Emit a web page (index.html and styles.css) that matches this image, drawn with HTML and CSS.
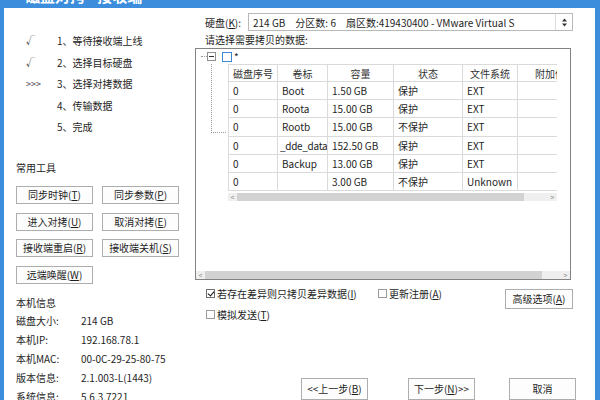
FILE: index.html
```html
<!DOCTYPE html>
<html lang="zh-CN">
<head>
  <meta charset="UTF-8" />
  <title>磁盘对拷 - 接收端</title>
  <link rel="stylesheet" href="styles.css">
</head>
<body>
  <div class="window">
    <div class="titlebar"><span class="title">磁盘对拷 - 接收端</span></div>
    <div class="frame">
      <aside class="side">
        <ul class="steps">
          <li><span class="mark">√</span>1、等待接收端上线</li>
          <li><span class="mark">√</span>2、选择目标硬盘</li>
          <li><span class="mark">&gt;&gt;&gt;</span>3、选择对拷数据</li>
          <li><span class="mark"></span>4、传输数据</li>
          <li><span class="mark"></span>5、完成</li>
        </ul>

        <div class="group-title">常用工具</div>
        <div class="tools">
          <button class="btn">同步时钟(<u>T</u>)</button>
          <button class="btn">同步参数(<u>P</u>)</button>
          <button class="btn">进入对拷(<u>U</u>)</button>
          <button class="btn">取消对拷(<u>E</u>)</button>
          <button class="btn">接收端重启(<u>R</u>)</button>
          <button class="btn">接收端关机(<u>S</u>)</button>
          <button class="btn">远端唤醒(<u>W</u>)</button>
        </div>

        <div class="info">
          <div class="info-title">本机信息</div>
          <div class="info-row"><span class="info-key">磁盘大小:</span><span>214 GB</span></div>
          <div class="info-row"><span class="info-key">本机IP:</span><span>192.168.78.1</span></div>
          <div class="info-row"><span class="info-key">本机MAC:</span><span>00-0C-29-25-80-75</span></div>
          <div class="info-row"><span class="info-key">版本信息:</span><span>2.1.003-L(1443)</span></div>
          <div class="info-row"><span class="info-key">系统信息:</span><span>5.6.3.7221</span></div>
        </div>
      </aside>

      <main class="main">
        <div class="disk-row">
          <span class="disk-label">硬盘(<u>K</u>):</span>
          <div class="select">
            <span class="select-part">214 GB</span>
            <span class="select-part">分区数: 6</span>
            <span>扇区数:419430400 - VMware Virtual S</span>
            <span class="select-arrow">
              <svg width="7" height="9" viewBox="0 0 7 9"><path d="M3.5 0.5 L6 3.5 H1 Z M1 5.5 H6 L3.5 8.5 Z" fill="#333"/></svg>
            </span>
          </div>
        </div>
        <div class="prompt">请选择需要拷贝的数据:</div>

        <div class="panel">
          <div class="tree-root">
            <span class="dot-h"></span>
            <span class="expander"></span>
            <span class="tree-check"></span>
            <span class="star">*</span>
          </div>
          <div class="tree-body">
            <span class="connector"></span>
            <div class="grid-wrap">
              <table class="grid">
                <colgroup>
                  <col style="width:49px"><col style="width:50px"><col style="width:66px">
                  <col style="width:69px"><col style="width:55px"><col style="width:75px">
                </colgroup>
                <thead>
                  <tr><th>磁盘序号</th><th>卷标</th><th>容量</th><th>状态</th><th>文件系统</th><th>附加信息</th></tr>
                </thead>
                <tbody>
                  <tr><td>0</td><td>Boot</td><td>1.50 GB</td><td>保护</td><td>EXT</td><td></td></tr>
                  <tr><td>0</td><td>Roota</td><td>15.00 GB</td><td>保护</td><td>EXT</td><td></td></tr>
                  <tr><td>0</td><td>Rootb</td><td>15.00 GB</td><td>不保护</td><td>EXT</td><td></td></tr>
                  <tr><td>0</td><td class="tight">_dde_data</td><td>152.50 GB</td><td>保护</td><td>EXT</td><td></td></tr>
                  <tr><td>0</td><td>Backup</td><td>13.00 GB</td><td>保护</td><td>EXT</td><td></td></tr>
                  <tr><td>0</td><td></td><td>3.00 GB</td><td>不保护</td><td>Unknown</td><td></td></tr>
                </tbody>
              </table>
              <div class="hscroll inner">
                <span class="arrow">&lt;</span>
                <span class="thumb"></span>
                <span class="track"></span>
                <span class="arrow">&gt;</span>
              </div>
            </div>
          </div>
          <div class="hscroll outer">
            <span class="arrow">&lt;</span>
            <span class="thumb"></span>
            <span class="track"></span>
            <span class="arrow">&gt;</span>
          </div>
        </div>

        <div class="options">
          <div class="checks">
            <div class="check-row">
              <label class="check first"><span class="box checked"></span>若存在差异则只拷贝差异数据(<u>I</u>)</label>
              <label class="check"><span class="box"></span>更新注册(<u>A</u>)</label>
            </div>
            <div class="check-row">
              <label class="check"><span class="box"></span>模拟发送(<u>T</u>)</label>
            </div>
          </div>
          <button class="btn btn-adv">高级选项(<u>A</u>)</button>
        </div>

        <div class="nav">
          <button class="btn btn-nav">&lt;&lt;上一步(<u>B</u>)</button>
          <button class="btn btn-nav next">下一步(<u>N</u>)&gt;&gt;</button>
          <button class="btn btn-nav cancel">取消</button>
        </div>
      </main>
    </div>
  </div>
</body>
</html>
```

FILE: styles.css
```css
* {
  box-sizing: border-box;
}

body {
  margin: 0;
  background: #fff;
  font-family: "Noto Sans CJK SC", "Noto Sans", sans-serif;
  font-size: 10px;
  color: #1e1e1e;
}

u {
  text-decoration: underline;
  text-underline-offset: 1px;
}

.window {
  width: 600px;
  height: 400px;
  overflow: hidden;
  display: flex;
  flex-direction: column;
}

.titlebar {
  height: 8px;
  background: #3c8ddb;
  overflow: hidden;
  padding-left: 25px;
}

.title {
  display: block;
  margin-top: -13px;
  line-height: 18px;
  font-size: 15px;
  font-weight: bold;
  color: #fff;
}

.frame {
  flex: 1;
  display: flex;
  border-left: 4px solid #3c8ddb;
  border-right: 5px solid #3c8ddb;
  overflow: hidden;
}

/* left column */
.side {
  width: 191px;
  flex-shrink: 0;
  padding: 22px 0 0 12px;
}

.steps {
  list-style: none;
  margin: 0 0 0 10px;
  padding: 0;
}

.steps li {
  display: flex;
  height: 21.5px;
  line-height: 21.5px;
}

.steps .mark {
  width: 31px;
  font-size: 9px;
  color: #333;
}

.group-title {
  margin-top: 22.5px;
  line-height: 16px;
}

.tools {
  margin-top: 10px;
  display: grid;
  grid-template-columns: 77px 77px;
  grid-auto-rows: 18px;
  column-gap: 9px;
  row-gap: 8.7px;
}

.btn {
  font-family: inherit;
  font-size: 10px;
  color: #1e1e1e;
  background: #fdfdfd;
  border: 1px solid #adadad;
  border-radius: 0;
  padding: 0;
  line-height: 1;
}

.info {
  margin-top: 9.5px;
}

.info-title,
.info-row {
  height: 18.8px;
  line-height: 18.8px;
}

.info-row {
  display: flex;
}

.info-key {
  width: 65px;
}

/* right column */
.main {
  width: 400px;
  flex-shrink: 0;
  padding-top: 5px;
  display: flex;
  flex-direction: column;
}

.disk-row {
  display: flex;
  align-items: center;
  padding-left: 10px;
  height: 18px;
}

.disk-label {
  width: 43px;
}

.select {
  width: 325px;
  height: 18px;
  border: 1px solid #b9b9b9;
  display: flex;
  align-items: center;
  padding-left: 4px;
}

.select-part {
  margin-right: 10px;
}

.select-arrow {
  margin-left: auto;
  width: 17px;
  height: 100%;
  border-left: 1px solid #dcdcdc;
  display: flex;
  align-items: center;
  justify-content: center;
}

.prompt {
  padding-left: 10px;
  line-height: 17px;
}

.panel {
  width: 376px;
  height: 239px;
  border: 1px solid #838383;
  display: flex;
  flex-direction: column;
}

.tree-root {
  height: 15px;
  display: flex;
  align-items: center;
}

.dot-h {
  margin-left: 5px;
  width: 6px;
  border-top: 1px dotted #999;
}

.expander {
  width: 9px;
  height: 9px;
  border: 1px solid #8f8f8f;
  position: relative;
}

.expander::after {
  content: "";
  position: absolute;
  left: 1px;
  right: 1px;
  top: 3px;
  border-top: 1px solid #333;
}

.tree-check {
  margin-left: 6px;
  width: 10px;
  height: 10px;
  border: 1px solid #3d86d8;
}

.star {
  margin-left: 2px;
  line-height: 10px;
  font-size: 10px;
}

.tree-body {
  display: flex;
  align-items: flex-start;
}

.connector {
  margin-left: 15px;
  width: 15px;
  height: 69px;
  border-left: 1px dotted #999;
  border-bottom: 1px dotted #999;
}

.grid-wrap {
  margin-left: 2px;
  width: 329px;
  overflow: hidden;
}

.grid {
  table-layout: fixed;
  width: 364px;
  border-collapse: collapse;
}

.grid th,
.grid td {
  border: 1px solid #dadada;
  padding: 0 4px;
  white-space: nowrap;
  overflow: hidden;
  font-weight: normal;
}

.grid th {
  height: 17px;
  text-align: center;
  color: #333;
}

.grid td {
  height: 18.2px;
  text-align: left;
}

.grid td.tight {
  padding: 0 2px;
  letter-spacing: -0.3px;
}

.hscroll {
  display: flex;
  align-items: center;
  height: 8px;
  background: #efefef;
}

.hscroll.inner {
  margin-top: 2px;
}

.hscroll .arrow {
  width: 9px;
  font-size: 7px;
  line-height: 8px;
  text-align: center;
  color: #888;
}

.hscroll .thumb {
  height: 100%;
  background: #d2d2d2;
}

.hscroll .track {
  flex: 1;
}

.hscroll.inner .thumb {
  width: 287px;
}

.hscroll.outer {
  margin-top: auto;
}

.hscroll.outer .thumb {
  width: 337px;
}

.options {
  display: flex;
  align-items: flex-start;
  padding: 2.5px 22px 0 11px;
}

.check-row {
  display: flex;
  align-items: center;
  height: 21px;
}

.check {
  display: flex;
  align-items: center;
}

.check.first {
  width: 172px;
}

.box {
  width: 9px;
  height: 9px;
  border: 1px solid #9a9a9a;
  margin-right: 2px;
  position: relative;
}

.box.checked {
  border-color: #707070;
}

.box.checked::after {
  content: "";
  position: absolute;
  left: 2px;
  top: 0;
  width: 3px;
  height: 5px;
  border-right: 1.5px solid #111;
  border-bottom: 1.5px solid #111;
  transform: rotate(40deg);
}

.btn-adv {
  margin-left: auto;
  margin-top: 6.5px;
  width: 68px;
  height: 20px;
}

.nav {
  margin-top: 53.5px;
  display: flex;
  justify-content: flex-end;
  padding-right: 19px;
}

.btn-nav {
  width: 67px;
  height: 22px;
  flex-shrink: 0;
}

.btn-nav.next {
  margin-left: 40px;
}

.btn-nav.cancel {
  margin-left: 34px;
}
```
